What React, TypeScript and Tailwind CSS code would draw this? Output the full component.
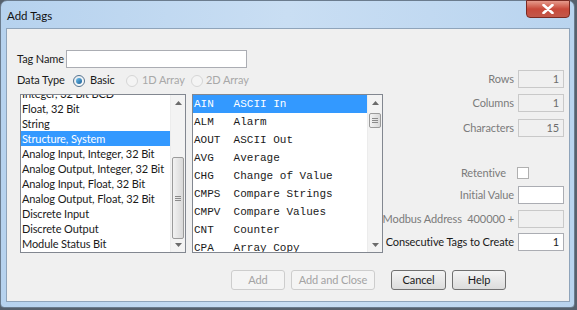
import React from 'react';

const typeItems = [
  'Integer, 32 Bit BCD',
  'Float, 32 Bit',
  'String',
  'Structure, System',
  'Analog Input, Integer, 32 Bit',
  'Analog Output, Integer, 32 Bit',
  'Analog Input, Float, 32 Bit',
  'Analog Output, Float, 32 Bit',
  'Discrete Input',
  'Discrete Output',
  'Module Status Bit',
];

const structItems = [
  ['AIN', 'ASCII In'],
  ['ALM', 'Alarm'],
  ['AOUT', 'ASCII Out'],
  ['AVG', 'Average'],
  ['CHG', 'Change of Value'],
  ['CMPS', 'Compare Strings'],
  ['CMPV', 'Compare Values'],
  ['CNT', 'Counter'],
  ['CPA', 'Array Copy'],
];

const Radio = ({ checked, disabled }: { checked?: boolean; disabled?: boolean }) => (
  <span
    className={
      'w-[12px] h-[12px] shrink-0 rounded-full border flex items-center justify-center ' +
      (disabled ? 'border-[#d6d6d6] bg-[#f4f4f4]' : 'border-[#55738f] bg-gradient-to-br from-[#e2e8ee] to-[#ffffff]')
    }
  >
    {checked && <span className="w-[6px] h-[6px] rounded-full bg-gradient-to-br from-[#6fc4f2] to-[#1a5d94]" />}
  </span>
);

const Arrow = ({ up }: { up?: boolean }) => (
  <div className="h-[15px] flex items-center justify-center">
    <svg width="7" height="4" viewBox="0 0 7 4">
      {up ? <path d="M0 4 L3.5 0 L7 4 Z" fill="#6b6b6b" /> : <path d="M0 0 L3.5 4 L7 0 Z" fill="#6b6b6b" />}
    </svg>
  </div>
);

const ScrollBar = ({ thumbTop, thumbH }: { thumbTop: number; thumbH: number }) => (
  <div className="w-[15px] h-full bg-[#f3f3f3] border-l border-[#ececec] flex flex-col">
    <Arrow up />
    <div className="flex-1 relative">
      <div
        className="absolute left-[1px] right-[1px] rounded-[2px] border border-[#9b9b9b] bg-gradient-to-r from-[#f2f2f2] to-[#d9d9d9] flex flex-col items-center justify-center gap-[1px]"
        style={{ top: thumbTop, height: thumbH }}
      >
        <span className="w-[6px] h-px bg-[#8a8a8a]" />
        <span className="w-[6px] h-px bg-[#8a8a8a]" />
        <span className="w-[6px] h-px bg-[#8a8a8a]" />
      </div>
    </div>
    <Arrow />
  </div>
);

const Field = ({ label, value, disabled, dark }: { label: string; value?: string; disabled?: boolean; dark?: boolean }) => (
  <div className="flex items-center justify-end gap-[4px] h-[18px]">
    <span className={'whitespace-pre ' + (dark ? 'text-[#1a1a1a]' : 'text-[#7b7b7b]')}>{label}</span>
    <div
      className={
        'w-[46px] h-[18px] shrink-0 border text-right pr-[4px] leading-[16px] ' +
        (disabled ? 'bg-[#f0f0f0] border-[#c9c9c9] text-[#6d6d6d]' : 'bg-white border-[#abadb3] text-[#1a1a1a]')
      }
    >
      {value}
    </div>
  </div>
);

const Btn = ({ children, w, disabled }: { children: React.ReactNode; w: string; disabled?: boolean }) => (
  <div
    className={
      w +
      ' h-[20px] rounded-[3px] border flex items-center justify-center whitespace-nowrap ' +
      (disabled
        ? 'border-[#cdcdcd] bg-[#f4f4f4] text-[#a3a3a3]'
        : 'border-[#707070] bg-gradient-to-b from-[#f4f4f4] to-[#dcdcdc] text-[#1a1a1a]')
    }
  >
    {children}
  </div>
);

export default function App() {
  return (
    <div
      className="w-[577px] h-[310px] bg-[#56616d] overflow-hidden text-[11px] tracking-[-0.1px] text-[#1a1a1a]"
      style={{ fontFamily: 'Lato, "Noto Sans", sans-serif' }}
    >
      <div className="w-[575px] h-[308px] rounded-t-[7px] rounded-b-[4px] border border-[#6b7c8e] bg-gradient-to-r from-[#b6d2ee] via-[#c9def3] to-[#b9d4ef] flex flex-col">
        {/* title bar */}
        <div className="h-[27px] flex justify-between">
          <span className="pl-[6px] pt-[6px] text-[11.5px] tracking-normal text-[#111]">Add Tags</span>
          <div className="mr-[4px] w-[44px] h-[18px] -mt-px rounded-b-[4px] border border-[#7a2a22] bg-gradient-to-b from-[#e59a8c] via-[#c8493a] to-[#c2584a] flex items-center justify-center">
            <svg width="12" height="10" viewBox="0 0 12 10">
              <path d="M1.5 1 L10.5 9 M10.5 1 L1.5 9" stroke="#ffffff" strokeWidth="2.6" strokeLinecap="round" />
            </svg>
          </div>
        </div>

        {/* client */}
        <div className="ml-[5px] w-[564px] h-[274px] border border-[#8fa4ba] bg-[#f0f0f0] flex flex-col">
          <div className="flex">
            {/* left column */}
            <div className="pl-[10px] flex flex-col w-[376px] shrink-0">
              <div className="mt-[21px] flex items-center h-[18px]">
                <span className="w-[49px] whitespace-nowrap">Tag Name</span>
                <div className="w-[181px] h-[18px] bg-white border border-[#abadb3]" />
              </div>
              <div className="mt-[5px] flex items-center h-[15px] whitespace-nowrap">
                <span className="w-[56px]">Data Type</span>
                <Radio checked />
                <span className="ml-[5px] w-[36px]">Basic</span>
                <Radio disabled />
                <span className="ml-[4px] w-[49px] text-[#a8a8a8]">1D Array</span>
                <Radio disabled />
                <span className="ml-[3px] text-[#a8a8a8]">2D Array</span>
              </div>
              <div className="mt-[6px] ml-[3px] flex gap-[6px] h-[159px]">
                <div className="w-[166px] h-full border border-[#828790] bg-white flex">
                  <div className="flex-1 overflow-hidden">
                    <div className="-mt-[9px]">
                      {typeItems.map((t) => (
                        <div
                          key={t}
                          className={
                            'h-[15px] leading-[15px] pl-px whitespace-nowrap ' +
                            (t === 'Structure, System' ? 'bg-[#3399ff] text-white' : '')
                          }
                        >
                          {t}
                        </div>
                      ))}
                    </div>
                  </div>
                  <ScrollBar thumbTop={47} thumbH={82} />
                </div>
                <div className="w-[191px] h-full border border-[#828790] bg-white flex">
                  <div
                    className="flex-1 overflow-hidden tracking-normal"
                    style={{ fontFamily: '"Liberation Mono", monospace' }}
                  >
                    {structItems.map(([c, d], i) => (
                      <div
                        key={c}
                        className={
                          'h-[18px] leading-[18px] pl-px whitespace-pre text-[11px] ' +
                          (i === 0 ? 'bg-[#3399ff] text-white' : '')
                        }
                      >
                        {c.padEnd(6, ' ') + d}
                      </div>
                    ))}
                  </div>
                  <ScrollBar thumbTop={3} thumbH={15} />
                </div>
              </div>
            </div>

            {/* right column */}
            <div className="flex-1 min-w-0 pr-[5px] flex flex-col">
              <div className="mt-[41px]">
                <Field label="Rows" value="1" disabled />
              </div>
              <div className="mt-[6px]">
                <Field label="Columns" value="1" disabled />
              </div>
              <div className="mt-[7px]">
                <Field label="Characters" value="15" disabled />
              </div>
              <div className="mt-[30px] flex items-center justify-end h-[12px]">
                <span className="text-[#7b7b7b] mr-[11px]">Retentive</span>
                <span className="w-[12px] h-[12px] border border-[#b0b0b0] bg-white mr-[35px]" />
              </div>
              <div className="mt-[7px]">
                <Field label="Initial Value" />
              </div>
              <div className="mt-[6px]">
                <Field label="Modbus Address  400000 +" disabled />
              </div>
              <div className="mt-[5px]">
                <Field label="Consecutive Tags to Create" value="1" dark />
              </div>
            </div>
          </div>

          {/* buttons */}
          <div className="mt-[17px] flex justify-end pr-[63px]">
            <Btn w="w-[54px]" disabled>Add</Btn>
            <Btn w="w-[84px] ml-[6px]" disabled>Add and Close</Btn>
            <Btn w="w-[55px] ml-[16px]">Cancel</Btn>
            <Btn w="w-[54px] ml-[6px]">Help</Btn>
          </div>
        </div>
      </div>
    </div>
  );
}
